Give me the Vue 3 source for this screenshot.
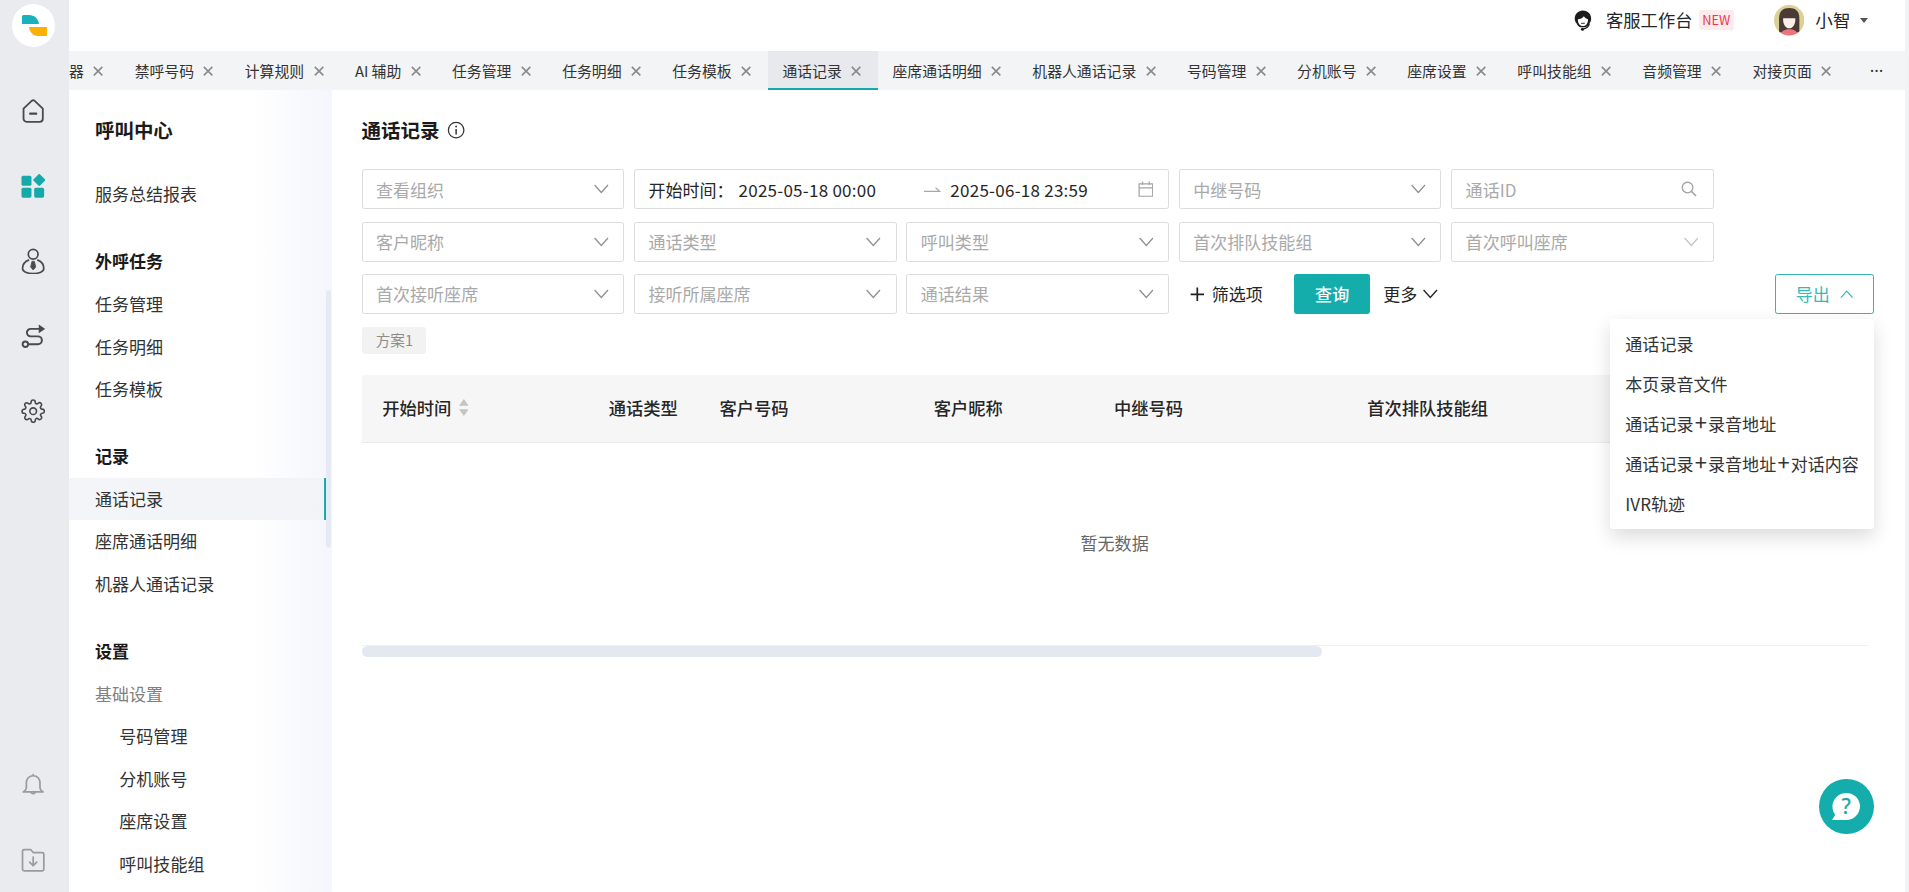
<script setup>
const tabs = [
  { label: '器', clipped: true },
  { label: '禁呼号码' },
  { label: '计算规则' },
  { label: 'AI 辅助' },
  { label: '任务管理' },
  { label: '任务明细' },
  { label: '任务模板' },
  { label: '通话记录', active: true },
  { label: '座席通话明细' },
  { label: '机器人通话记录' },
  { label: '号码管理' },
  { label: '分机账号' },
  { label: '座席设置' },
  { label: '呼叫技能组' },
  { label: '音频管理' },
  { label: '对接页面' }
]

const menu = [
  { items: [{ label: '呼叫中心', kind: 'head' }] },
  { items: [{ label: '服务总结报表' }] },
  { items: [{ label: '外呼任务', kind: 'group' }, { label: '任务管理' }, { label: '任务明细' }, { label: '任务模板' }] },
  { items: [{ label: '记录', kind: 'group' }, { label: '通话记录', active: true }, { label: '座席通话明细' }, { label: '机器人通话记录' }] },
  {
    items: [
      { label: '设置', kind: 'group' },
      { label: '基础设置', kind: 'muted' },
      { label: '号码管理', kind: 'sub' },
      { label: '分机账号', kind: 'sub' },
      { label: '座席设置', kind: 'sub' },
      { label: '呼叫技能组', kind: 'sub' }
    ]
  }
]

const filters = [
  { type: 'select', label: '查看组织' },
  { type: 'date', label: '开始时间' },
  { type: 'select', label: '中继号码' },
  { type: 'search', label: '通话ID' },
  { type: 'select', label: '客户昵称', start: true },
  { type: 'select', label: '通话类型' },
  { type: 'select', label: '呼叫类型' },
  { type: 'select', label: '首次排队技能组' },
  { type: 'select', label: '首次呼叫座席', faint: true },
  { type: 'select', label: '首次接听座席', start: true },
  { type: 'select', label: '接听所属座席' },
  { type: 'select', label: '通话结果' }
]

const columns = [
  { label: '开始时间', width: 186, sort: true },
  { label: '通话类型', width: 91 },
  { label: '客户号码', width: 176 },
  { label: '客户昵称', width: 148 },
  { label: '中继号码', width: 208 },
  { label: '首次排队技能组', width: 200 }
]

const exportItems = [
  ['通话记录'],
  ['本页录音文件'],
  ['通话记录', '录音地址'],
  ['通话记录', '录音地址', '对话内容'],
  ['IVR轨迹']
]
</script>

<template>
  <div class="page">
    <aside class="rail">
      <div class="logo">
        <svg viewBox="0 0 43 43" class="logo-mark">
          <path d="M10 12.500a1.500 1.500 0 0 1 1.500-1.500H17c5.500 0 9.500 4 10 9H10z" fill="#17b3bd" />
          <path d="M17 23h18v9h-9c-5 0-8.500-4-9-9z" fill="#fbb003" />
        </svg>
      </div>
      <div class="rail-item">
        <svg viewBox="0 0 24 24" class="rail-icon" fill="none" stroke="#4a4a4a" stroke-width="1.800" stroke-linejoin="round" stroke-linecap="round">
          <path d="M2.500 9.500 10.500 1.900a2.200 2.200 0 0 1 3 0l8 7.600v10a3 3 0 0 1-3 3h-13a3 3 0 0 1-3-3z" />
          <path d="M9 14.500h6" stroke-width="2.200" />
        </svg>
      </div>
      <div class="rail-item">
        <svg viewBox="0 0 24 24" class="rail-icon" fill="#14aaa9">
          <rect x="0.500" y="1.700" width="9.800" height="9.800" rx="1.500" />
          <rect x="14.200" y="0.700" width="9" height="9" rx="1.200" transform="rotate(45 18.700 5.200) translate(0 1)" />
          <rect x="0.500" y="13.500" width="9.800" height="9.800" rx="1.500" />
          <rect x="13" y="13.500" width="9.800" height="9.800" rx="1.500" />
        </svg>
      </div>
      <div class="rail-item">
        <svg viewBox="0 0 24 26" class="rail-icon person" fill="none" stroke="#4a4a4a" stroke-width="1.700" stroke-linejoin="round">
          <circle cx="12" cy="6" r="4.800" />
          <path d="M8 11.500C4 13 1.500 16.500 1.500 20c0 3 4.500 5 10.500 5s10.500-2 10.500-5c0-3.500-2.500-7-6.500-8.500" />
          <path d="M10.800 13h2.400l1.300 5.500-2.500 3-2.500-3z" fill="#4a4a4a" stroke-width="0.800" />
        </svg>
      </div>
      <div class="rail-item">
        <svg viewBox="0 0 24 24" class="rail-icon" fill="none" stroke="#4a4a4a" stroke-width="1.900">
          <path d="M18 4.800H9.500a3.700 3.700 0 0 0 0 7.400h7.200a3.900 3.900 0 0 1 0 7.800H7.800" />
          <circle cx="4.300" cy="20" r="2.700" />
          <path d="M17.500.500l6.200 4.300-6.200 4.300z" fill="#4a4a4a" stroke="none" />
        </svg>
      </div>
      <div class="rail-item">
        <svg viewBox="0 0 24 24" class="rail-icon" fill="none" stroke="#4a4a4a" stroke-width="1.600" stroke-linejoin="round">
          <circle cx="12" cy="12" r="3.300" />
          <path d="M19.400 15a1.650 1.650 0 0 0 .33 1.820l.06.06a2 2 0 0 1 0 2.830 2 2 0 0 1-2.830 0l-.06-.06a1.650 1.650 0 0 0-1.820-.33 1.650 1.650 0 0 0-1 1.510V21a2 2 0 0 1-2 2 2 2 0 0 1-2-2v-.09A1.650 1.650 0 0 0 9 19.400a1.650 1.650 0 0 0-1.820.33l-.06.06a2 2 0 0 1-2.830 0 2 2 0 0 1 0-2.830l.06-.06a1.650 1.650 0 0 0 .33-1.820 1.650 1.650 0 0 0-1.510-1H3a2 2 0 0 1-2-2 2 2 0 0 1 2-2h.09A1.650 1.650 0 0 0 4.600 9a1.650 1.650 0 0 0-.33-1.820l-.06-.06a2 2 0 0 1 0-2.830 2 2 0 0 1 2.830 0l.06.06a1.650 1.650 0 0 0 1.820.33H9a1.650 1.650 0 0 0 1-1.510V3a2 2 0 0 1 2-2 2 2 0 0 1 2 2v.09a1.650 1.650 0 0 0 1 1.510 1.650 1.650 0 0 0 1.820-.33l.06-.06a2 2 0 0 1 2.830 0 2 2 0 0 1 0 2.830l-.06.06a1.650 1.650 0 0 0-.33 1.820V9a1.650 1.650 0 0 0 1.510 1H21a2 2 0 0 1 2 2 2 2 0 0 1-2 2h-.09a1.650 1.650 0 0 0-1.510 1z" />
        </svg>
      </div>
      <div class="rail-item rail-bottom">
        <svg viewBox="0 0 24 24" class="rail-icon" fill="none" stroke="#9b9b9b" stroke-width="1.700" stroke-linejoin="round" stroke-linecap="round">
          <path d="M12 1.500v1.200M12 2.700c-4 0-6.700 3-6.700 7v4.800c0 1.700-1.300 3-3 4.200h19.400c-1.700-1.200-3-2.500-3-4.200V9.700c0-4-2.700-7-6.700-7z" />
          <path d="M9.800 18.700a2.300 2.300 0 0 0 4.400 0" />
        </svg>
      </div>
      <div class="rail-item">
        <svg viewBox="0 0 24 24" class="rail-icon" fill="none" stroke="#9b9b9b" stroke-width="1.700" stroke-linejoin="round" stroke-linecap="round">
          <path d="M1.500 3a1.500 1.500 0 0 1 1.500-1.500h6.500l2.500 3h9A1.500 1.500 0 0 1 22.500 6v15a1.500 1.500 0 0 1-1.500 1.500H3A1.500 1.500 0 0 1 1.500 21z" />
          <path d="M12 9v8.500M8.500 14l3.500 3.500 3.500-3.500" />
        </svg>
      </div>
    </aside>

    <div class="shell">
      <header class="topbar">
        <svg viewBox="0 0 24 24" class="agent">
          <path d="M12 1C6.500 1 3 5 3 10c0 2 .8 3.800 2 5 .5 1.700 2 3.500 4 4.300h6c2-.8 3.500-2.600 4-4.300 1.200-1.200 2-3 2-5 0-5-3.500-9-9-9z" fill="#1c1c1c" />
          <path d="M6.500 10.500c2.500 0 5-1.200 6.500-3.200 1 1.700 2.800 3 4.500 3.200.4 4-2 7.500-5.500 7.500s-5.900-3.500-5.500-7.500z" fill="#fff" />
          <path d="M19 15c-.5 3-3 5.500-6.500 6" fill="none" stroke="#1c1c1c" stroke-width="1.400" />
          <circle cx="11.500" cy="21.500" r="1.700" fill="#1c1c1c" />
          <path d="M10 15h4" stroke="#1c1c1c" stroke-width="1" />
        </svg>
        <span class="agent-label">客服工作台</span>
        <span class="new-badge">NEW</span>
        <svg viewBox="0 0 30 30" class="avatar">
          <defs>
            <clipPath id="avatar-clip"><ellipse cx="15" cy="15" rx="15" ry="15" /></clipPath>
          </defs>
          <g clip-path="url(#avatar-clip)">
            <rect width="30" height="30" fill="#dbd195" />
            <path d="M5 27V13C5 6 9 3 15 3s10 3 10 10v14z" fill="#4a3a36" />
            <path d="M9 13c4 0 9 0 12 0 .4 5-2 10-6 10s-6.400-5-6-10z" fill="#fbeee8" />
            <path d="M6 32c0-5 3-8 9-8s9 3 9 8z" fill="#ec7480" />
          </g>
        </svg>
        <span class="user">小智</span>
        <span class="caret"></span>
      </header>

      <nav class="tabs">
        <div
          v-for="tab in tabs"
          :key="tab.label"
          class="tab"
          :class="{ active: tab.active, clipped: tab.clipped }"
        >
          <span>{{ tab.label }}</span>
          <svg viewBox="0 0 10 10" class="close">
            <path d="M1.500 1.500l7 7M8.500 1.500l-7 7" />
          </svg>
        </div>
        <div class="more-tabs">···</div>
      </nav>

      <div class="body">
        <div class="sidebar">
          <section v-for="(group, i) in menu" :key="i" class="menu-group">
            <div
              v-for="item in group.items"
              :key="item.label"
              class="menu-item"
              :class="[item.kind, { active: item.active }]"
            >
              {{ item.label }}
            </div>
          </section>
          <div class="side-thumb"></div>
        </div>

        <main class="main">
          <h1 class="title">
            通话记录
            <svg viewBox="0 0 16 16" class="info" fill="none" stroke="#333" stroke-width="1.100">
              <circle cx="8" cy="8" r="6.800" />
              <path d="M8 7v4.800" stroke-width="1.300" />
              <circle cx="8" cy="4.800" r=".8" fill="#333" stroke="none" />
            </svg>
          </h1>

          <div class="filters">
            <template v-for="f in filters" :key="f.label">
              <div v-if="f.type === 'date'" class="field date">
                <span class="date-label">开始时间：</span>
                <span class="date-from">2025-05-18 00:00</span>
                <svg viewBox="0 0 14 6" class="arrow" fill="none" stroke="#a9a9a9" stroke-width="1">
                  <path d="M0 4.500h13L9.500 1.500" />
                </svg>
                <span class="date-to">2025-06-18 23:59</span>
                <svg viewBox="0 0 14 14" class="calendar" fill="none" stroke="#a3a3a3" stroke-width="1.100">
                  <path d="M1 2.500h12v11H1zM1 6h12M4 .500v3M10 .500v3" />
                </svg>
              </div>
              <div v-else class="field" :class="{ 'row-start': f.start }">
                <span class="placeholder">{{ f.label }}</span>
                <svg v-if="f.type === 'search'" viewBox="0 0 14 14" class="search" fill="none" stroke="#a3a3a3" stroke-width="1.200">
                  <circle cx="5.800" cy="5.800" r="4.700" />
                  <path d="M9.300 9.300l4 4" stroke-width="1.500" />
                </svg>
                <svg v-else viewBox="0 0 12 8" class="chevron" :class="{ faint: f.faint }" fill="none" stroke-width="1">
                  <path d="M.5.800 6 7 11.500.800" />
                </svg>
              </div>
            </template>

            <div class="actions">
              <span class="add-filter">
                <svg viewBox="0 0 12 12" class="plus" fill="none" stroke="#222" stroke-width="1.400">
                  <path d="M6 .500v11M.500 6h11" />
                </svg>
                筛选项
              </span>
              <button class="btn-query" type="button">查询</button>
              <span class="more">
                更多
                <svg viewBox="0 0 12 8" class="more-chevron" fill="none" stroke="#222" stroke-width="1.100">
                  <path d="M.5.800 6 7 11.500.800" />
                </svg>
              </span>
              <button class="btn-export" type="button">
                导出
                <svg viewBox="0 0 12 8" class="up-chevron" fill="none" stroke="#35bab6" stroke-width="1.100">
                  <path d="M.5 7.200 6 1l5.500 6.200" />
                </svg>
              </button>
            </div>
          </div>

          <div class="plan"><span class="plan-tag">方案1</span></div>

          <div class="table">
            <div class="thead">
              <div
                v-for="col in columns"
                :key="col.label"
                class="th"
                :style="{ width: col.width + 'px' }"
              >
                {{ col.label }}
                <svg v-if="col.sort" viewBox="0 0 8 14" class="sort" fill="#c4c4c4">
                  <path d="M4 0l4 5.500H0zM4 14 0 8.500h8z" />
                </svg>
              </div>
            </div>
            <div class="empty">暂无数据</div>
            <div class="hscroll"><div class="hscroll-thumb"></div></div>
          </div>

          <ul class="export-menu">
            <li v-for="parts in exportItems" :key="parts.join()">
              <template v-for="(part, i) in parts" :key="part">
                <span v-if="i" class="join">+</span>{{ part }}
              </template>
            </li>
          </ul>

          <div class="fab">
            <svg viewBox="0 0 32 32" class="fab-icon">
              <path d="M16 1C8 1 1.500 7.500 1.500 15c0 3.500 1 6.500 3 9L1 29.500h15c8 0 14.500-6.500 14.500-14.500S24 1 16 1z" fill="#fff" />
              <text x="16" y="23.500" text-anchor="middle" class="fab-q">?</text>
            </svg>
          </div>
        </main>
      </div>
    </div>
    <div class="page-scroll"></div>
  </div>
</template>

<style scoped>
.page {
  zoom: 1.2175;
  width: 1568px;
  height: 732.7px;
  display: flex;
  overflow: hidden;
  background: #fff;
  color: #333;
  font-family: "Noto Sans CJK SC", "Noto Sans", sans-serif;
  font-size: 14px;
}
.rail {
  flex: 0 0 56.7px;
  background: #e9ebef;
  display: flex;
  flex-direction: column;
  align-items: center;
}
.logo {
  width: 35.300px;
  height: 35.300px;
  margin-top: 3.500px;
  margin-bottom: 21.300px;
  margin-left: -2px;
  border-radius: 50%;
  background: #fff;
  flex: none;
}
.logo-mark { display: block; width: 100%; height: 100%; }
.rail-item {
  flex: 0 0 61.700px;
  width: 100%;
  display: flex;
  align-items: center;
  justify-content: center;
}
.rail-bottom { margin-top: auto; }
.rail-item:last-child { margin-bottom: -5px; }
.rail-icon { width: 20px; height: 20px; display: block; margin-left: -2px; }
.rail-icon.person { height: 22px; }

.shell {
  flex: 1;
  min-width: 0;
  display: flex;
  flex-direction: column;
}
.topbar {
  flex: 0 0 42px;
  display: flex;
  align-items: center;
  justify-content: flex-end;
  padding-bottom: 9px;
  padding-right: 30px;
  background: #fff;
  box-sizing: border-box;
}
.agent { width: 18px; height: 19px; margin-right: 10px; }
.agent-label { font-size: 14.200px; color: #262626; line-height: 20px; }
.new-badge {
  margin-left: 5px;
  width: 29px;
  text-align: center;
  height: 17px;
  line-height: 17px;
  font-size: 10.500px;
  color: #e8394a;
  background: #fdebee;
  border-radius: 2px;
}
.avatar { width: 25px; height: 25px; margin-left: 33px; margin-top: 1px; }
.user { margin-left: 9px; color: #262626; font-size: 14.400px; line-height: 20px; }
.caret {
  margin-left: 8px;
  width: 0;
  height: 0;
  border-left: 4px solid transparent;
  border-right: 4px solid transparent;
  border-top: 4.500px solid #555;
}

.tabs {
  flex: 0 0 32px;
  display: flex;
  align-items: stretch;
  background: #f3f4f6;
  position: relative;
  overflow: hidden;
}
.tab {
  display: flex;
  align-items: center;
  padding: 2px 12.800px 0 12px;
  font-size: 12.200px;
  line-height: 20px;
  color: #333;
  white-space: nowrap;
  box-sizing: border-box;
  border-bottom: 2px solid transparent;
}
.tab.clipped { padding-left: 0; }
.tab.active { background: #e7e9ec; border-bottom-color: #14aaa9; }
.close {
  width: 10px;
  height: 10px;
  margin-left: 6.900px;
  fill: none;
  stroke: #8a8a8a;
  stroke-width: 1.300;
}
.more-tabs {
  position: absolute;
  right: 17.500px;
  top: 7px;
  font-family: "Noto Sans", sans-serif;
  color: #333;
  font-size: 14px;
  line-height: 18px;
}

.body {
  flex: 1;
  min-height: 0;
  display: flex;
}
.sidebar {
  flex: 0 0 216.300px;
  position: relative;
  overflow: hidden;
  box-sizing: border-box;
  padding: 15.500px 5.500px 0 0;
  background: linear-gradient(90deg, #fff 0%, #fff 70%, #f4f6fc 100%);
}
.menu-group { margin-bottom: 20px; }
.menu-group:first-child { margin-bottom: 18px; }
.menu-item {
  height: 35px;
  line-height: 35px;
  padding-left: 21.300px;
  color: #333;
  white-space: nowrap;
}
.menu-item.head { font-size: 16px; font-weight: 700; color: #1a1a1a; }
.menu-item.group { font-weight: 700; color: #1a1a1a; }
.menu-item.muted { color: #808080; }
.menu-item.sub { padding-left: 41.300px; }
.menu-item.active {
  background: linear-gradient(90deg, #f3f5f8, #f1f3f6);
  box-shadow: inset -1.600px 0 0 #14aaa9;
}
.side-thumb {
  position: absolute;
  right: 1px;
  top: 164px;
  width: 4.500px;
  height: 212px;
  border-radius: 2px;
  background: #e6eaf5;
}

.main {
  flex: 1;
  min-width: 0;
  position: relative;
  box-sizing: border-box;
  padding: 22px 25.400px 0 24px;
}
.title {
  margin: 0;
  height: 22px;
  line-height: 22px;
  font-size: 16px;
  font-weight: 700;
  color: #1a1a1a;
  display: flex;
  align-items: center;
}
.info { width: 15px; height: 15px; margin-left: 6px; }

.filters {
  margin-top: 21px;
  display: grid;
  grid-template-columns: repeat(5, 215.750px) 1fr;
  grid-auto-rows: 33px;
  column-gap: 8px;
  row-gap: 10px;
}
.field {
  display: flex;
  align-items: center;
  justify-content: space-between;
  box-sizing: border-box;
  border: 1px solid #dcdcdc;
  border-radius: 2px;
  padding: 0 12px 0 11px;
  background: #fff;
}
.row-start { grid-column: 1; }
.placeholder { color: #a9a9a9; white-space: nowrap; }
.chevron { width: 12px; height: 8px; stroke: #8e8e8e; }
.chevron.faint { stroke: #c4c4c4; }
.search { width: 13px; height: 13px; margin-right: 1px; }
.date { grid-column: 2 / span 2; justify-content: flex-start; color: #262626; }
.date-label { width: 74px; flex: none; }
.date-from { width: 152px; flex: none; letter-spacing: 0.2px; }
.arrow { width: 14px; height: 6px; margin-right: 8px; flex: none; }
.date-to { flex: 1; letter-spacing: 0.2px; }
.calendar { width: 13px; height: 13px; flex: none; }

.actions {
  grid-column: 4 / 7;
  display: flex;
  align-items: center;
  padding-left: 9px;
}
.add-filter { display: inline-flex; align-items: center; color: #262626; }
.plus { width: 12px; height: 12px; margin-right: 6px; }
.btn-query {
  margin-left: 26px;
  width: 62px;
  height: 33px;
  border: 0;
  border-radius: 2px;
  background: #14adab;
  color: #fff;
  font: inherit;
  font-weight: 500;
  padding: 0;
}
.more { margin-left: 11px; display: inline-flex; align-items: center; color: #262626; }
.more-chevron { width: 12px; height: 8px; margin-left: 5px; }
.btn-export {
  margin-left: auto;
  width: 81px;
  height: 33px;
  box-sizing: border-box;
  border: 1px solid #2fb7b4;
  border-radius: 2px;
  background: #fff;
  color: #35bab6;
  font: inherit;
  padding: 0;
  display: inline-flex;
  align-items: center;
  justify-content: center;
}
.up-chevron { width: 11px; height: 7px; margin-left: 8px; }

.plan { margin-top: 11px; height: 22px; display: flex; padding-left: 0.6px; }
.plan-tag {
  padding: 0 11px;
  line-height: 22px;
  font-size: 12px;
  color: #8c8c8c;
  background: #f2f2f2;
  border-radius: 2px;
}
.table { margin-top: 17px; margin-right: 5px; }
.thead {
  height: 56px;
  box-sizing: border-box;
  background: #f6f6f6;
  border-bottom: 1px solid #e9e9e9;
  border-radius: 2px 2px 0 0;
  display: flex;
  align-items: center;
  padding: 0 0 1.500px 17px;
}
.th {
  display: flex;
  align-items: center;
  flex: none;
  color: #262626;
  font-weight: 500;
  font-size: 14.200px;
}
.sort { width: 8px; height: 14px; margin-left: 6px; }
.empty {
  height: 166px;
  box-sizing: border-box;
  padding-bottom: 2px;
  display: flex;
  align-items: center;
  justify-content: center;
  color: #666;
}
.hscroll { border-top: 1px solid #efefef; height: 10px; }
.hscroll-thumb {
  width: 789px;
  height: 9px;
  border-radius: 5px;
  background: #e4e8f1;
}

.export-menu {
  position: absolute;
  left: 1049px;
  top: 188px;
  width: 217px;
  margin: 0;
  padding: 4px 0 4px;
  list-style: none;
  background: #fff;
  box-shadow: 0 6px 16px rgba(0, 0, 0, 0.14);
  border-radius: 2px;
  z-index: 3;
}
.export-menu li {
  height: 32.900px;
  line-height: 32.900px;
  padding-left: 13px;
  color: #333;
  white-space: nowrap;
}
.join { padding: 0 1px; font-size: 18px; line-height: 1; }
.fab {
  position: absolute;
  left: 1221px;
  top: 566px;
  width: 45px;
  height: 45px;
  border-radius: 50%;
  background: #14adab;
  display: flex;
  align-items: center;
  justify-content: center;
}
.fab-icon { width: 25px; height: 25px; margin-top: 1px; }
.fab-q {
  font-family: "Noto Sans", sans-serif;
  font-size: 22px;
  font-weight: 500;
  fill: #14adab;
}
.page-scroll { flex: 0 0 3.600px; background: #f1f2f4; }
</style>

<style>
html, body { margin: 0; overflow: hidden; background: #fff; }
</style>
